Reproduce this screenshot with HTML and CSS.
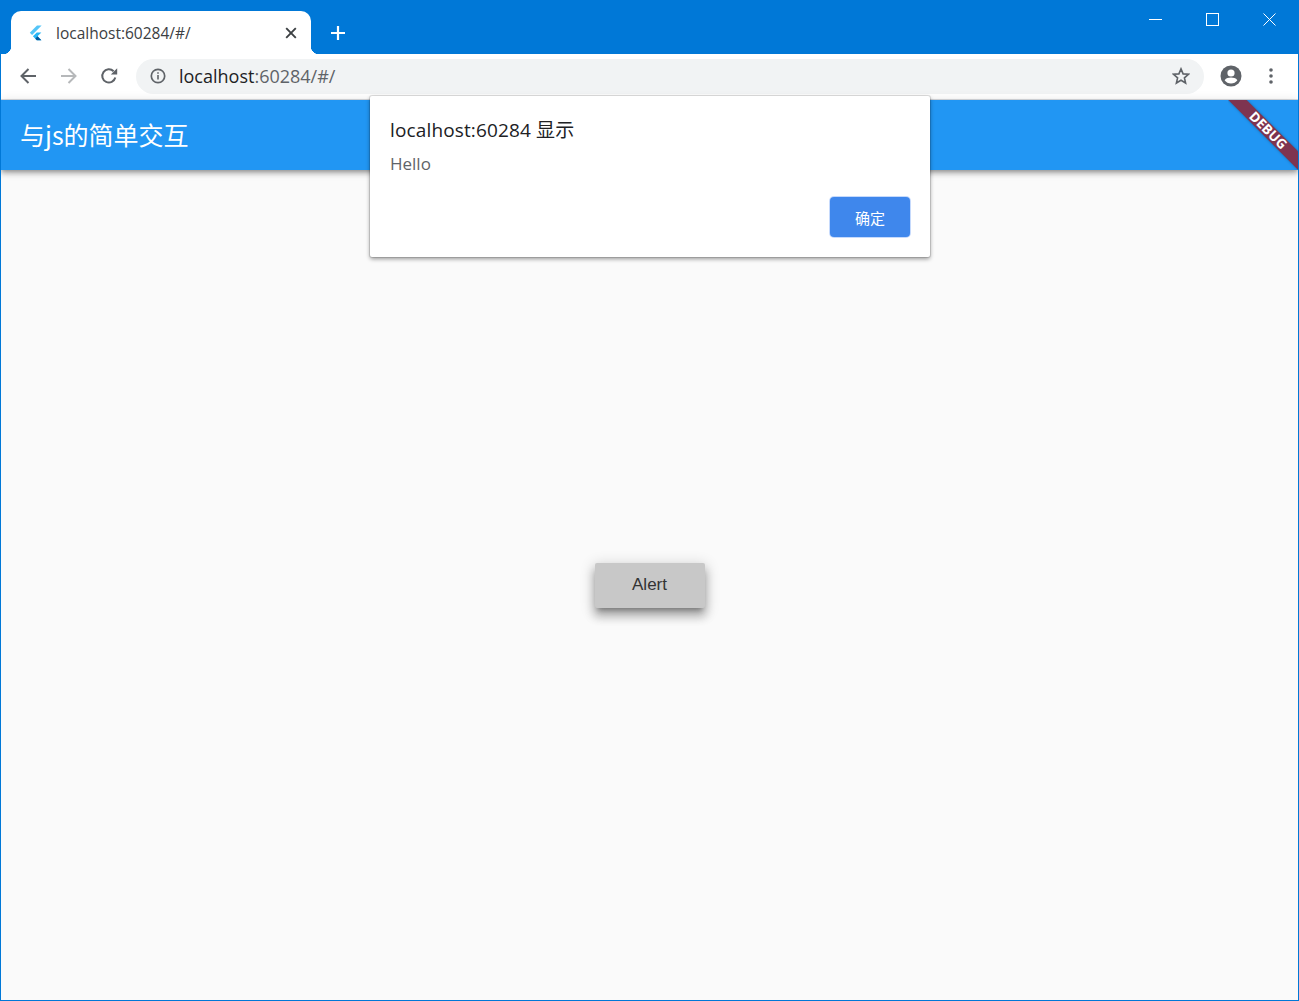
FILE: index.html
```html
<!DOCTYPE html>
<html lang="zh">
<head>
<meta charset="utf-8">
<title>localhost:60284/#/</title>
<link rel="stylesheet" href="styles.css">
</head>
<body>
<div class="window">
  <header class="titlebar">
    <div class="tab">
      <svg class="favicon" width="16" height="16" viewBox="0 0 16 16"><path d="M9 .5 1.800 7.700l2.300 2.300L13.600.5z" fill="#54c5f8"/><path d="M8.800 7.400 4.900 11.300l3.900 4h4.600l-3.900-4 3.900-3.900z" fill="#29b6f6"/><path d="M7.300 13.800 9.500 11.300l3.900 4H8.800z" fill="#01579b"/></svg>
      <span class="tab-title">localhost:60284/#/</span>
      <svg class="tab-close" width="12" height="12" viewBox="0 0 12 12"><path d="M1.200 1.200l9.600 9.600M10.800 1.200l-9.600 9.600" stroke="#3c4043" stroke-width="1.900" fill="none"/></svg>
    </div>
    <svg class="new-tab" width="16" height="16" viewBox="0 0 16 16"><path d="M8 1v14M1 8h14" stroke="#fff" stroke-width="2.200" fill="none"/></svg>
    <div class="window-controls">
      <svg class="win-btn" width="13" height="13" viewBox="0 0 13 13"><path d="M0 6.500h13" stroke="#fff" fill="none"/></svg>
      <svg class="win-btn" width="13" height="13" viewBox="0 0 13 13"><rect x=".5" y=".5" width="12" height="12" stroke="#fff" fill="none"/></svg>
      <svg class="win-btn" width="13" height="13" viewBox="0 0 13 13"><path d="M.5.5l12 12M12.500.5l-12 12" stroke="#fff" fill="none"/></svg>
    </div>
  </header>
  <nav class="toolbar">
    <svg class="nav-icon nav-back" width="18" height="18" viewBox="0 0 18 18"><path d="M17 9H2.500M9.500 2 2.500 9l7 7" stroke="#5f6368" stroke-width="2" fill="none"/></svg>
    <svg class="nav-icon" width="18" height="18" viewBox="0 0 18 18"><path d="M1 9h14.500M8.500 2l7 7-7 7" stroke="#b6b8ba" stroke-width="2" fill="none"/></svg>
    <svg class="nav-icon" width="18" height="18" viewBox="0 0 18 18"><path d="M15.300 10.500A6.600 6.600 0 1 1 13.600 4.300" stroke="#5f6368" stroke-width="2" fill="none"/><path d="M10.800 7.600h6.400V1.200z" fill="#5f6368"/></svg>
    <div class="omnibox">
      <svg class="info" width="16" height="16" viewBox="0 0 16 16"><circle cx="8" cy="8" r="6.700" stroke="#5f6368" stroke-width="1.700" fill="none"/><path d="M7.200 7h1.600v4.600H7.200zM7.200 4.200h1.600v1.600H7.200z" fill="#5f6368"/></svg>
      <span class="url"><span class="host">localhost</span>:60284/#/</span>
      <svg class="star" width="18" height="18" viewBox="0 0 18 18"><path d="M9 1.900l2.100 5 5.300.4-4 3.500 1.200 5.200L9 13.300 4.400 16l1.200-5.200-4-3.500 5.300-.4z" stroke="#5f6368" stroke-width="1.600" fill="none"/></svg>
    </div>
    <svg class="avatar" width="22" height="22" viewBox="0 0 22 22"><circle cx="11" cy="11" r="10.500" fill="#5f6368"/><circle cx="11" cy="8" r="3.600" fill="#fff"/><path d="M4.600 15.200C6 13.200 8.800 12.600 11 12.600s5 .6 6.400 2.600c-1.400 2-3.800 3.300-6.400 3.300s-5-1.300-6.400-3.300z" fill="#fff"/></svg>
    <svg class="menu" width="4" height="16" viewBox="0 0 4 16"><circle cx="2" cy="2" r="1.800" fill="#5f6368"/><circle cx="2" cy="8" r="1.800" fill="#5f6368"/><circle cx="2" cy="14" r="1.800" fill="#5f6368"/></svg>
  </nav>
  <main class="app">
    <div class="appbar">
      <h1 class="app-title">与js的简单交互</h1>
      <div class="debug-corner"><span class="debug-ribbon">DEBUG</span></div>
    </div>
    <div class="content">
      <button class="alert-btn" type="button">Alert</button>
    </div>
  </main>
  <section class="dialog">
    <h2 class="dialog-title">localhost:60284 显示</h2>
    <p class="dialog-msg">Hello</p>
    <div class="dialog-actions"><button class="ok-btn" type="button">确定</button></div>
  </section>
</div>
</body>
</html>
```

FILE: styles.css
```css
* { box-sizing: border-box; }
html, body { margin: 0; height: 100%; overflow: hidden; }
body { font-family: "Open Sans", "Noto Sans", "Noto Sans CJK SC", sans-serif; }

.window {
  position: relative;
  height: 1001px;
  width: 1299px;
  display: flex;
  flex-direction: column;
  border: 1px solid #0078d7;
  overflow: hidden;
}

.titlebar {
  height: 53px;
  flex: none;
  background: #0078d7;
  display: flex;
  align-items: flex-end;
  padding-left: 10px;
}
.tab {
  position: relative;
  width: 300px;
  height: 43px;
  background: #fff;
  border-radius: 10px 10px 0 0;
  display: flex;
  align-items: center;
  padding: 0 14px 0 17px;
}
.tab::before, .tab::after {
  content: "";
  position: absolute;
  bottom: 0;
  width: 8px;
  height: 8px;
}
.tab::before { left: -8px; background: radial-gradient(circle at 0 0, transparent 8px, #fff 8.5px); }
.tab::after { right: -8px; background: radial-gradient(circle at 100% 0, transparent 8px, #fff 8.5px); }
.favicon { flex: none; margin-right: 12px; }
.tab-title { font-size: 15.5px; color: #3c4043; flex: 1; white-space: nowrap; }
.tab-close { flex: none; }
.new-tab { flex: none; margin: 0 0 13px 19px; }
.window-controls {
  margin-left: auto;
  align-self: flex-start;
  display: flex;
  gap: 44px;
  padding: 12px 22px 0 0;
}

.toolbar {
  height: 46px;
  flex: none;
  background: #fff;
  border-bottom: 1px solid #dadce0;
  display: flex;
  align-items: center;
  padding: 0 7px 1px 18px;
}
.nav-icon { flex: none; margin-right: 22px; }
.nav-back { margin-right: 23px; }
.omnibox {
  flex: 1;
  height: 35px;
  margin-left: -4px;
  background: #f1f3f4;
  border-radius: 18px;
  display: flex;
  align-items: center;
  padding: 0 14px;
}
.info { flex: none; margin-right: 13px; }
.url { font-size: 18px; line-height: 24px; color: #5f6368; flex: 1; white-space: nowrap; margin-top: -1px; }
.host { color: #202124; }
.star { flex: none; }
.avatar { flex: none; margin-left: 16px; }
.menu { flex: none; margin-left: 27px; margin-right: 18px; }

.app {
  flex: 1;
  display: flex;
  flex-direction: column;
  background: #fafafa;
}
.appbar {
  position: relative;
  z-index: 1;
  height: 70px;
  flex: none;
  background: #2196f3;
  box-shadow: 0 2px 4px -1px rgba(0,0,0,.25), 0 4px 5px rgba(0,0,0,.18), 0 1px 10px rgba(0,0,0,.12);
  display: flex;
  align-items: center;
  padding: 0 0 3px 19px;
}
.app-title {
  margin: 0;
  font-family: "Noto Sans CJK SC", "Open Sans", sans-serif;
  font-size: 25px;
  font-weight: 400;
  color: #fff;
}
.debug-corner {
  position: absolute;
  top: 0;
  right: 0;
  width: 70px;
  height: 70px;
  overflow: hidden;
}
.debug-ribbon {
  position: absolute;
  top: 23.5px;
  right: -20px;
  width: 100px;
  height: 13px;
  transform: rotate(45deg);
  background: #7e3450;
  color: #fff;
  font-family: "Open Sans", sans-serif;
  font-size: 13.5px;
  font-weight: 700;
  line-height: 13px;
  text-align: center;
  box-shadow: 0 0 3px rgba(0,0,0,.3);
}

.content {
  flex: 1;
  display: flex;
  align-items: center;
  justify-content: center;
}
.alert-btn {
  width: 110px;
  height: 45px;
  border: 0;
  border-radius: 2px;
  background: #c8c8c8;
  color: #333;
  font-family: "Liberation Sans", Arial, sans-serif;
  font-size: 17px;
  box-shadow: 0 5px 5px -3px rgba(0,0,0,.3), 0 8px 10px 1px rgba(0,0,0,.22), 0 3px 14px 2px rgba(0,0,0,.16);
}

.dialog {
  position: absolute;
  left: 369px;
  top: 95px;
  width: 560px;
  height: 161px;
  z-index: 2;
  background: #fff;
  border-radius: 2px;
  box-shadow: 0 0 0 1px rgba(0,0,0,.1), 0 2px 4px rgba(0,0,0,.4);
  padding: 21px 20px 0;
}
.dialog-title { margin: 0; font-size: 19px; font-weight: 400; color: #202124; line-height: 26px; letter-spacing: .14px; }
.dialog-msg { margin: 9px 0 0; font-size: 17px; color: #5f6368; line-height: 23px; }
.dialog-actions { display: flex; justify-content: flex-end; margin-top: 22px; }
.ok-btn {
  width: 80px;
  height: 40px;
  border: 0;
  border-radius: 4px;
  background: #3f87ec;
  box-shadow: 0 0 0 1px rgba(66,133,244,.3);
  color: #fff;
  font-family: "Noto Sans CJK SC", sans-serif;
  font-size: 15px;
}
```
